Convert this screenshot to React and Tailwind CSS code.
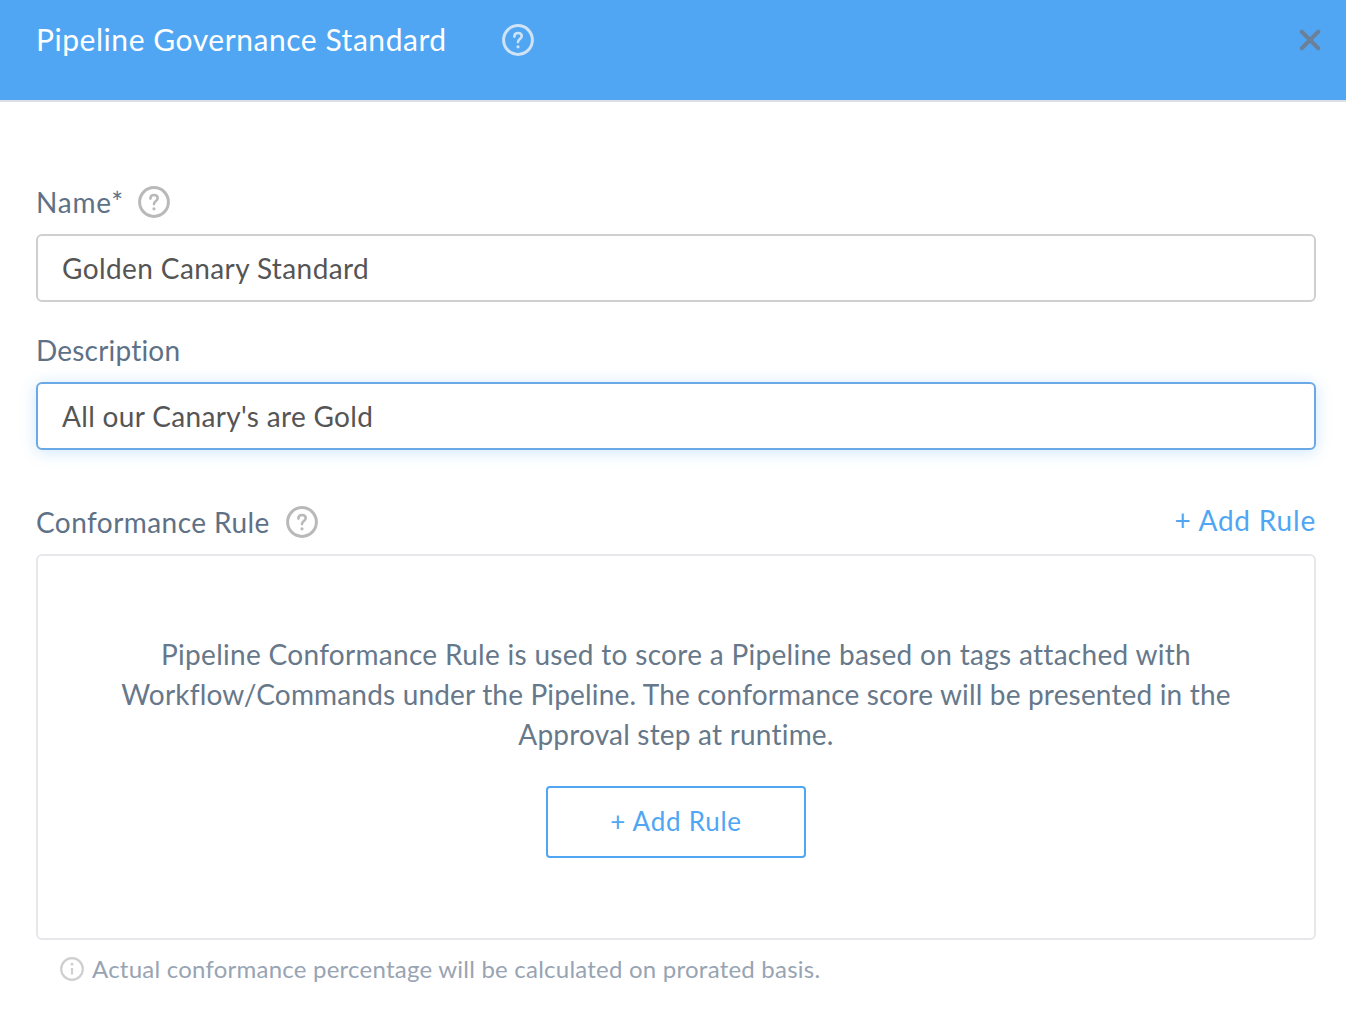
const FONT = "font-['Lato','Noto_Sans',sans-serif]";

function HelpIcon({ className }) {
  return (
    <svg viewBox="0 0 32 32" className={className} fill="none" stroke="currentColor">
      <circle cx="16" cy="16" r="14.4" strokeWidth="3" />
      <path d="M12.4 12.6c0-2.2 1.6-3.6 3.7-3.6s3.6 1.3 3.6 3.2c0 2.9-3.7 2.9-3.7 5.9" strokeWidth="2.6" strokeLinecap="round" />
      <circle cx="16" cy="22.8" r="1.6" fill="currentColor" stroke="none" />
    </svg>
  );
}

function InfoIcon({ className }) {
  return (
    <svg viewBox="0 0 24 24" className={className} fill="none" stroke="currentColor">
      <circle cx="12" cy="12" r="10.8" strokeWidth="2.2" />
      <path d="M12 11v6.5" strokeWidth="2.2" />
      <circle cx="12" cy="7.2" r="1.4" fill="currentColor" stroke="none" />
    </svg>
  );
}

export default function App() {
  return (
    <div className={`${FONT} w-[1346px] h-[1014px] bg-white overflow-hidden`}>
      <div className="h-[102px] bg-[#50a6f2] border-b-2 border-[#dcdfe3] flex items-start justify-between pl-9 pr-[25px] pt-[24px]">
        <div className="flex items-center">
          <h1 className="w-[466px] text-[30px] leading-[30px] pb-[2px] text-white tracking-[0.55px]">Pipeline Governance Standard</h1>
          <HelpIcon className="w-8 h-8 text-[#cfe3f5]" />
        </div>
        <svg viewBox="0 0 24 24" className="w-[22px] h-[22px] mt-[5px] text-[#6a8199]" fill="none" stroke="currentColor" strokeWidth="4.4" strokeLinecap="round">
          <path d="M3 3l18 18M21 3L3 21" />
        </svg>
      </div>

      <div className="px-9 pr-[30px] pt-[84px]">
        <div className="h-8 flex items-center gap-[14px]">
          <span className="text-[28px] text-[#5e7186] tracking-[0.8px]">Name*</span>
          <HelpIcon className="w-8 h-8 text-[#b9b9b9]" />
        </div>
        <div className="mt-4 h-[68px] rounded-md border-2 border-[#cfcfcf] flex items-center px-6 text-[28px] text-[#555] tracking-[0.4px]">
          Golden Canary Standard
        </div>

        <div className="mt-[32px] h-8 flex items-center text-[28px] text-[#5e7186] tracking-[0.2px]">Description</div>
        <div className="mt-4 h-[68px] rounded-md border-2 border-[#6aa9e6] shadow-[0_2px_16px_rgba(80,166,242,0.28)] flex items-center px-6 text-[28px] text-[#555] tracking-[0.33px]">
          All our Canary's are Gold
        </div>

        <div className="mt-[56px] h-8 flex items-center justify-between">
          <div className="flex items-center gap-4">
            <span className="text-[28px] text-[#5e7186] tracking-[0.44px]">Conformance Rule</span>
            <HelpIcon className="w-8 h-8 text-[#b9b9b9]" />
          </div>
          <button className="text-[28px] leading-8 pb-1 text-[#50a6f2] tracking-[0.8px]">+ Add Rule</button>
        </div>

        <div className="mt-[16px] h-[386px] rounded-md border-2 border-[#e6e7eb] flex flex-col items-center pt-[78px]">
          <p className="w-[1140px] text-center text-[28px] leading-10 text-[#66788a]">
            <span className="block tracking-[0.3px]">Pipeline Conformance Rule is used to score a Pipeline based on tags attached with</span>
            <span className="block tracking-[0.17px]">Workflow/Commands under the Pipeline. The conformance score will be presented in the</span>
            <span className="block tracking-[0.2px]">Approval step at runtime.</span>
          </p>
          <button className="mt-[32px] w-[260px] h-[72px] pb-[2px] rounded border-2 border-[#50a6f2] text-[26px] text-[#50a6f2] tracking-[0.75px]">+ Add Rule</button>
        </div>

        <div className="mt-[11px] pl-6 flex items-center gap-[8px]">
          <InfoIcon className="w-6 h-6 text-[#cfcfcf]" />
          <span className="text-[24px] text-[#98a4b3] tracking-[0.23px]">Actual conformance percentage will be calculated on prorated basis.</span>
        </div>
      </div>
    </div>
  );
}
